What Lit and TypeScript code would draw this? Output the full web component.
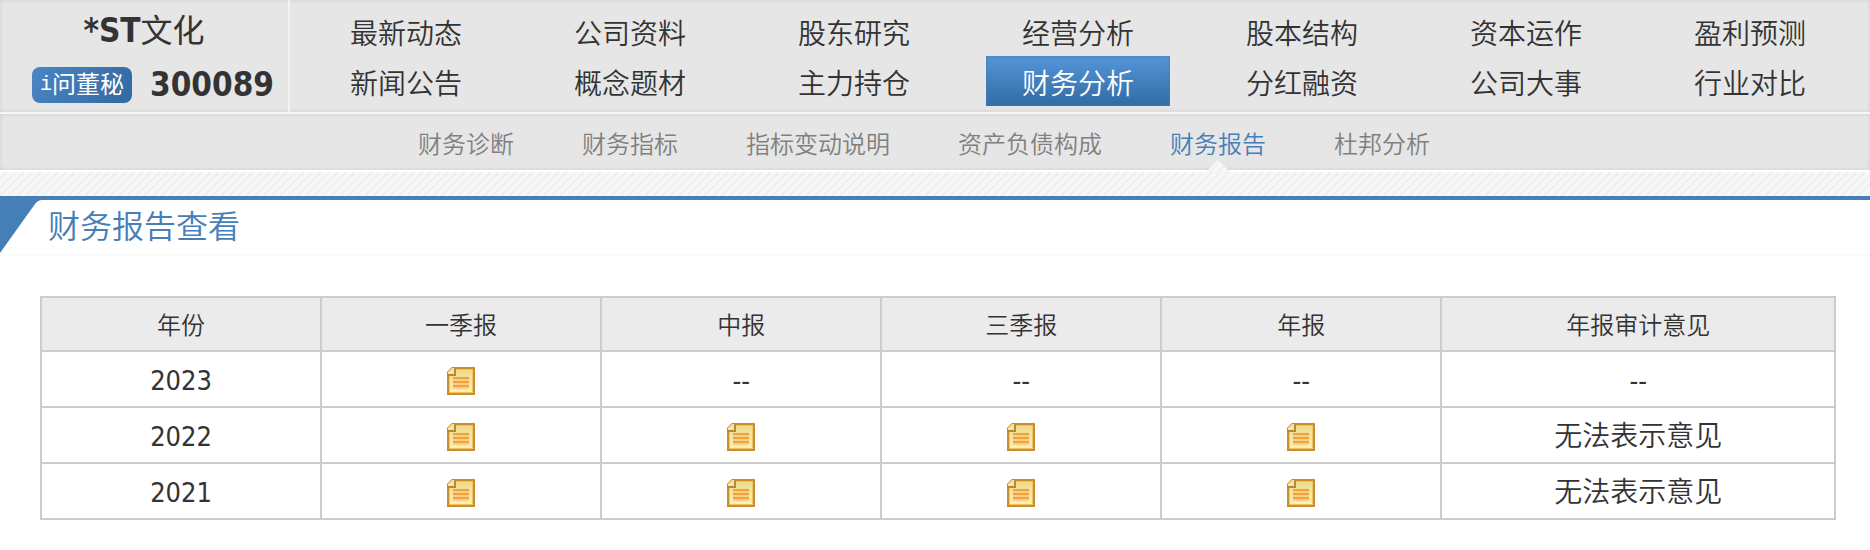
import { LitElement, html, css, svg } from "lit";
import { customElement, property } from "lit/decorators.js";
import { classMap } from "lit/directives/class-map.js";

const MENU: string[][] = [
  ["最新动态", "公司资料", "股东研究", "经营分析", "股本结构", "资本运作", "盈利预测"],
  ["新闻公告", "概念题材", "主力持仓", "财务分析", "分红融资", "公司大事", "行业对比"],
];

const SUB_MENU = ["财务诊断", "财务指标", "指标变动说明", "资产负债构成", "财务报告", "杜邦分析"];

const COLUMNS = ["年份", "一季报", "中报", "三季报", "年报", "年报审计意见"];

interface ReportRow {
  year: string;
  reports: boolean[];
  opinion: string;
}

const ROWS: ReportRow[] = [
  { year: "2023", reports: [true, false, false, false], opinion: "--" },
  { year: "2022", reports: [true, true, true, true], opinion: "无法表示意见" },
  { year: "2021", reports: [true, true, true, true], opinion: "无法表示意见" },
];

@customElement("note-icon")
class NoteIcon extends LitElement {
  static styles = css`
    :host {
      display: block;
      width: 28px;
      height: 28px;
    }
    svg {
      display: block;
    }
  `;

  render() {
    return html`<svg width="28" height="28" viewBox="0 0 28 28" aria-hidden="true">
      <defs>
        <linearGradient id="paper" x1="0" y1="0" x2="0" y2="1">
          <stop offset="0" stop-color="#eedb8a" />
          <stop offset="1" stop-color="#fdf0b4" />
        </linearGradient>
      </defs>
      <path d="M5 0H28V28H0V5Z" fill="#cf8d29" />
      <path d="M6 2H26V26H2V6Z" fill="#e9c670" />
      <path d="M9 3H25V25H3V9H9Z" fill="url(#paper)" />
      <path d="M5 1H7V7H1V5Z" fill="#f3e2b4" />
      <path d="M8 0V8H0" fill="none" stroke="#b98a30" stroke-width="2" />
      <path d="M0 5L5 0" fill="none" stroke="#dfb768" stroke-width="1" />
      ${[11, 15, 19].map(
        (y) => svg`<path d="M6 ${y}H22" stroke="#f0a33c" stroke-width="2" />
          <path d="M6 ${y + 2}H22" stroke="#f9cf85" stroke-width="2" />`
      )}
    </svg>`;
  }
}

@customElement("app-root")
class AppRoot extends LitElement {
  @property() active = "财务分析";
  @property() activeSub = "财务报告";

  static styles = css`
    :host {
      --blue: #467eb6;
      --hatch: repeating-linear-gradient(135deg, #f7f7f7 0 4px, #efefef 4px 6px);
      display: block;
      color: #333;
      background: #fff;
      font-family: "DejaVu Sans Condensed", "Noto Sans CJK SC", sans-serif;
      font-size: 28px;
      font-weight: 350;
    }
    a {
      color: inherit;
      text-decoration: none;
    }
    .top {
      display: flex;
      background: #e6e6e6;
      border-bottom: 2px solid #f8f8f8;
      box-shadow: inset 0 0 4px #ccc;
    }
    .stock {
      box-sizing: border-box;
      flex: none;
      width: 290px;
      padding: 6px 0;
      border-right: 2px solid #f2f2f2;
    }
    .name,
    .code {
      margin: 0;
      font-size: 33px;
      font-weight: 700;
    }
    .name {
      line-height: 50px;
      text-align: center;
    }
    .name-cjk {
      font-size: 32px;
      font-weight: 400;
    }
    .code {
      display: flex;
      align-items: center;
      gap: 18px;
      padding-left: 32px;
      padding-top: 8px;
      line-height: 42px;
    }
    .ask {
      display: flex;
      align-items: center;
      justify-content: center;
      width: 100px;
      height: 36px;
      border-radius: 8px;
      color: #fff;
      background: linear-gradient(120deg, #4a86c4, #3269a0);
      font-size: 24px;
      line-height: 36px;
      font-weight: 400;
    }
    .ask-i {
      font-family: "Liberation Mono", monospace;
      font-size: 20px;
    }
    .menu {
      flex: 1;
      display: grid;
      grid-template-columns: repeat(7, 1fr);
      padding: 6px 8px 6px 4px;
    }
    .menu-item {
      justify-self: center;
      padding: 8px 36px 0;
      line-height: 42px;
      white-space: nowrap;
    }
    .menu-item.on {
      color: #fff;
      background: linear-gradient(#5596d9, #316ba3);
      box-shadow: inset 0 0 4px #467eb6;
    }
    .sub {
      display: flex;
      justify-content: center;
      gap: 68px;
      padding-right: 22px;
      background: #e6e6e6;
      border-bottom: 2px solid #fff;
      box-shadow: inset 0 0 4px #ccc;
      color: #808080;
      font-size: 24px;
      line-height: 50px;
    }
    .sub-item {
      position: relative;
      padding-top: 6px;
      white-space: nowrap;
    }
    .sub-item.on {
      color: var(--blue);
    }
    .sub-item.on::after {
      content: "";
      position: absolute;
      left: 50%;
      bottom: -2px;
      width: 24px;
      height: 12px;
      margin-left: -12px;
      background: var(--hatch);
      clip-path: polygon(50% 0, 100% 100%, 0 100%);
    }
    .strip {
      height: 24px;
      background: var(--hatch);
    }
    .head {
      display: flex;
      border-top: 4px solid var(--blue);
      border-bottom: 2px solid #fafafa;
    }
    .corner {
      flex: none;
      width: 48px;
      height: 54px;
    }
    .title {
      margin: 0;
      color: var(--blue);
      font-size: 32px;
      line-height: 54px;
      font-weight: 350;
    }
    .body {
      padding: 40px 34px 24px 40px;
    }
    .reports {
      width: 100%;
      table-layout: fixed;
      border-collapse: collapse;
      text-align: center;
    }
    .reports th,
    .reports td {
      border: 2px solid #ccc;
      padding: 4px 0 0;
    }
    .reports th {
      width: 15.5%;
      background: #ebebeb;
      font-size: 24px;
      line-height: 48px;
      font-weight: 350;
    }
    .reports th:last-child {
      width: auto;
    }
    .reports td {
      height: 50px;
      line-height: 50px;
    }
    .reports .num {
      font-size: 27px;
    }
    .file {
      display: flex;
      justify-content: center;
    }
  `;

  private menuItem(text: string) {
    return html`<a href="#" class=${classMap({ "menu-item": true, on: text === this.active })}>${text}</a>`;
  }

  private subItem(text: string) {
    return html`<a href="#" class=${classMap({ "sub-item": true, on: text === this.activeSub })}>${text}</a>`;
  }

  private reportCell(available: boolean) {
    return available
      ? html`<td><a class="file" href="#" aria-label="查看报告"><note-icon></note-icon></a></td>`
      : html`<td class="num">--</td>`;
  }

  render() {
    return html`
      <header class="top">
        <div class="stock">
          <h1 class="name">*ST<span class="name-cjk">文化</span></h1>
          <div class="code">
            <a class="ask" href="#"><span class="ask-i">i</span>问董秘</a>
            <span>300089</span>
          </div>
        </div>
        <nav class="menu">${MENU.flat().map((t) => this.menuItem(t))}</nav>
      </header>
      <nav class="sub">${SUB_MENU.map((t) => this.subItem(t))}</nav>
      <div class="strip"></div>
      <main>
        <div class="head">
          <svg class="corner" viewBox="0 0 48 54" aria-hidden="true">
            <path d="M0 0H42Q38 0 35 4L0 53Z" fill="#467eb6" />
          </svg>
          <h2 class="title">财务报告查看</h2>
        </div>
        <div class="body">
          <table class="reports">
            <thead>
              <tr>
                ${COLUMNS.map((c) => html`<th scope="col">${c}</th>`)}
              </tr>
            </thead>
            <tbody>
              ${ROWS.map(
                (r) => html`<tr>
                  <td class="num">${r.year}</td>
                  ${r.reports.map((v) => this.reportCell(v))}
                  <td class=${classMap({ num: r.opinion === "--" })}>${r.opinion}</td>
                </tr>`
              )}
            </tbody>
          </table>
        </div>
      </main>
    `;
  }
}
